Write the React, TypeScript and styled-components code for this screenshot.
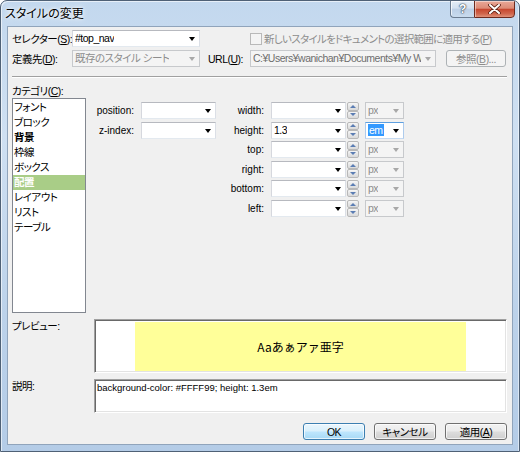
import React from 'react';
import styled, { createGlobalStyle, css } from 'styled-components';

const JP = `"Liberation Sans", "Noto Sans CJK JP", sans-serif`;

const GlobalStyle = createGlobalStyle`
  html, body {
    margin: 0;
    padding: 0;
    background: #ffffff;
  }
  body {
    font-family: ${JP};
    font-size: 10.5px;
    letter-spacing: -0.5px;
    font-feature-settings: "palt";
    color: #000;
  }
  * {
    box-sizing: border-box;
  }
`;

const units = ['width', 'height', 'top', 'right', 'bottom', 'left'];
const categories = ['フォント', 'ブロック', '背景', '枠線', 'ボックス', '配置', 'レイアウト', 'リスト', 'テーブル'];

const App = () => {
  return (
    <>
      <GlobalStyle />
      <Window>
        <TitleBar>
          <Title>スタイルの変更</Title>
          <Caption>
            <HelpButton>?</HelpButton>
            <CloseButton>
              <svg width="13" height="10" viewBox="0 0 13 10">
                <path d="M2 1 L11 9 M11 1 L2 9" stroke="#5a1d10" strokeWidth="3.6" strokeLinecap="round" />
                <path d="M2 1 L11 9 M11 1 L2 9" stroke="#ffffff" strokeWidth="2" strokeLinecap="round" />
              </svg>
            </CloseButton>
          </Caption>
        </TitleBar>

        <Client>
          <FormRow>
            <FieldLabel>
              セレクター(<u>S</u>):
            </FieldLabel>
            <Combo $width={128}>
              <ComboText>#top_nav</ComboText>
              <Arrow />
            </Combo>
            <CheckArea>
              <CheckBox />
              <DisabledText>
                新しいスタイルをドキュメントの選択範囲に適用する(<u>P</u>)
              </DisabledText>
            </CheckArea>
          </FormRow>

          <FormRow $gap>
            <FieldLabel>
              定義先(<u>D</u>):
            </FieldLabel>
            <Combo $width={128} $disabled>
              <ComboText>既存のスタイル シート</ComboText>
              <Arrow $disabled />
            </Combo>
            <UrlLabel>
              URL(<u>U</u>):
            </UrlLabel>
            <Combo $width={186} $disabled>
              <ComboText $dark>C:¥Users¥wanichan¥Documents¥My Web</ComboText>
              <Arrow $disabled />
            </Combo>
            <PushButton $width={60} $disabled $ml={10}>
              参照(<u>B</u>)...
            </PushButton>
          </FormRow>

          <Separator />

          <SectionLabel>
            カテゴリ(<u>C</u>):
          </SectionLabel>

          <Main>
            <ListBox>
              {categories.map((c) => (
                <ListItem key={c} $bold={c === '背景'} $selected={c === '配置'}>
                  {c}
                </ListItem>
              ))}
            </ListBox>

            <Pane>
              <PosGroup>
                <PropRow>
                  <PropLabel $width={40}>position:</PropLabel>
                  <Combo $width={75}>
                    <Arrow />
                  </Combo>
                </PropRow>
                <PropRow>
                  <PropLabel $width={40}>z-index:</PropLabel>
                  <Combo $width={75}>
                    <Arrow />
                  </Combo>
                </PropRow>
              </PosGroup>

              <SizeGroup>
                {units.map((u) => (
                  <PropRow key={u}>
                    <PropLabel $width={43}>{u}:</PropLabel>
                    <Combo $width={75}>
                      {u === 'height' && <ComboText>1.3</ComboText>}
                      <Arrow />
                    </Combo>
                    <Spinner>
                      <SpinHalf>
                        <SpinArrow $up />
                      </SpinHalf>
                      <SpinHalf>
                        <SpinArrow />
                      </SpinHalf>
                    </Spinner>
                    {u === 'height' ? (
                      <Combo $width={39} $focused $ml={6}>
                        <ComboText>
                          <Selected>em</Selected>
                        </ComboText>
                        <Arrow />
                      </Combo>
                    ) : (
                      <Combo $width={39} $disabled $ml={6}>
                        <ComboText>px</ComboText>
                        <Arrow $disabled />
                      </Combo>
                    )}
                  </PropRow>
                ))}
              </SizeGroup>
            </Pane>
          </Main>

          <BoxRow $height={54}>
            <BoxLabel>プレビュー:</BoxLabel>
            <SunkenBox $preview>
              <Swatch>Aaあぁアァ亜字</Swatch>
            </SunkenBox>
          </BoxRow>

          <BoxRow $height={34}>
            <BoxLabel>説明:</BoxLabel>
            <SunkenBox>
              <Description>background-color: #FFFF99; height: 1.3em</Description>
            </SunkenBox>
          </BoxRow>

          <ButtonBar>
            <PushButton $width={62} $default>
              OK
            </PushButton>
            <PushButton $width={62}>キャンセル</PushButton>
            <PushButton $width={62}>
              適用(<u>A</u>)
            </PushButton>
          </ButtonBar>
        </Client>
      </Window>
    </>
  );
};

export default App;

const Window = styled.div`
  width: 520px;
  height: 452px;
  display: flex;
  flex-direction: column;
  border: 1px solid #4f6176;
  border-radius: 7px 7px 0 0;
  background: linear-gradient(180deg, #c3d8ee 0%, #cfe0f2 30%, #bcd2ea 70%, #b4cce7 100%);
  box-shadow: inset 1px 1px 0 rgba(255, 255, 255, 0.6), inset -1px 0 0 rgba(255, 255, 255, 0.5);
  overflow: hidden;
`;

const TitleBar = styled.div`
  height: 25px;
  display: flex;
  align-items: flex-start;
  padding-left: 4px;
`;

const Title = styled.div`
  font-family: "Noto Sans CJK JP", sans-serif;
  font-size: 12px;
  letter-spacing: 0;
  line-height: 24px;
  color: #000;
  text-shadow: 0 0 6px #ffffff, 0 0 3px #ffffff;
`;

const Caption = styled.div`
  margin-left: auto;
  margin-right: 4px;
  display: flex;
  margin-top: -1px;
`;

const HelpButton = styled.div`
  width: 24px;
  height: 18px;
  border: 1px solid #6b7c90;
  border-right: none;
  border-radius: 0 0 0 4px;
  background: linear-gradient(180deg, #e4edf7 0%, #d3e1f0 45%, #bccfe6 50%, #c9dbee 100%);
  box-shadow: inset 1px 1px 0 rgba(255, 255, 255, 0.7);
  display: flex;
  align-items: center;
  justify-content: center;
  font-family: "Liberation Sans", sans-serif;
  font-size: 12px;
  font-weight: bold;
  color: #fff;
  text-shadow: 0 0 1px #3b4a5c, 0 0 1px #3b4a5c, 0 0 2px #3b4a5c;
`;

const CloseButton = styled.div`
  width: 41px;
  height: 18px;
  border: 1px solid #6e2a1e;
  border-radius: 0 0 4px 0;
  background: linear-gradient(180deg, #e9a898 0%, #dd8b76 45%, #c7472f 52%, #d0664d 80%, #e0917a 100%);
  box-shadow: inset 1px 1px 0 rgba(255, 255, 255, 0.45);
  display: flex;
  align-items: center;
  justify-content: center;
`;

const Client = styled.div`
  flex: 1;
  margin: 0 6px 6px 6px;
  border: 1px solid #90a4bb;
  background: #f0f0f0;
  padding: 3px 5px 0 4px;
  display: flex;
  flex-direction: column;
`;

const FormRow = styled.div<{ $gap?: boolean }>`
  display: flex;
  align-items: center;
  height: 17px;
  margin-top: ${({ $gap }) => ($gap ? '3px' : '0')};
`;

const FieldLabel = styled.div`
  width: 60px;
  white-space: nowrap;
`;

const UrlLabel = styled(FieldLabel)`
  width: 42px;
  margin-left: 8px;
`;

const CheckArea = styled.div`
  display: flex;
  align-items: center;
  margin-left: 50px;
`;

const CheckBox = styled.div`
  width: 12px;
  height: 12px;
  border: 1px solid #b9b9b9;
  background: #f4f4f4;
  margin-right: 2px;
`;

const DisabledText = styled.span`
  color: #8d8d8d;
  white-space: nowrap;
  letter-spacing: -0.7px;
`;

const Combo = styled.div<{ $width: number; $disabled?: boolean; $focused?: boolean; $ml?: number }>`
  position: relative;
  width: ${({ $width }) => $width}px;
  height: 17px;
  flex: none;
  margin-left: ${({ $ml }) => $ml ?? 0}px;
  display: flex;
  align-items: center;
  padding: 0 14px 0 2px;
  background: #ffffff;
  border: 1px solid;
  border-color: #b7b9bf #dbdfe6 #e3e9ef #d6d8de;
  overflow: hidden;
  ${({ $disabled }) =>
    $disabled &&
    css`
      background: #f4f4f4;
      border-color: #c7c9cc;
      color: #8d8d8d;
    `}
  ${({ $focused }) =>
    $focused &&
    css`
      border-color: #5d9fe0 #aecbec #c5daf2 #aecbec;
    `}
`;

const ComboText = styled.span<{ $dark?: boolean }>`
  white-space: nowrap;
  overflow: hidden;
  line-height: 15px;
  color: ${({ $dark }) => ($dark ? '#6d6d6d' : 'inherit')};
`;

const Selected = styled.span`
  background: #3399ff;
  color: #ffffff;
  padding: 0 1px;
`;

const Arrow = styled.span<{ $disabled?: boolean }>`
  position: absolute;
  right: 4px;
  top: 6px;
  width: 0;
  height: 0;
  border-left: 3.5px solid transparent;
  border-right: 3.5px solid transparent;
  border-top: 4px solid ${({ $disabled }) => ($disabled ? '#a8a8a8' : '#000000')};
`;

const PushButton = styled.div<{ $width: number; $disabled?: boolean; $default?: boolean; $ml?: number }>`
  width: ${({ $width }) => $width}px;
  height: 17px;
  flex: none;
  margin-left: ${({ $ml }) => $ml ?? 0}px;
  display: flex;
  align-items: center;
  justify-content: center;
  white-space: nowrap;
  border: 1px solid #707070;
  border-radius: 3px;
  background: linear-gradient(180deg, #f2f2f2 0%, #ebebeb 48%, #dddddd 52%, #cfcfcf 100%);
  box-shadow: inset 0 0 0 1px rgba(255, 255, 255, 0.7);
  ${({ $default }) =>
    $default &&
    css`
      border-color: #3c7fb1;
      background: linear-gradient(180deg, #eaf6fd 0%, #d9f0fc 48%, #bee6fd 52%, #a7d9f5 100%);
    `}
  ${({ $disabled }) =>
    $disabled &&
    css`
      border-color: #adb2b5;
      background: #f4f4f4;
      color: #8d8d8d;
      box-shadow: none;
    `}
`;

const Separator = styled.div`
  margin-top: 9px;
  height: 2px;
  border-top: 1px solid #a0a0a0;
  border-bottom: 1px solid #ffffff;
`;

const SectionLabel = styled.div`
  margin-top: 6px;
  height: 14px;
  line-height: 14px;
`;

const Main = styled.div`
  display: flex;
  height: 215px;
`;

const ListBox = styled.div`
  width: 74px;
  background: #ffffff;
  border: 1px solid #828790;
  padding-top: 1px;
`;

const ListItem = styled.div<{ $bold?: boolean; $selected?: boolean }>`
  height: 15px;
  line-height: 15px;
  padding-left: 1px;
  white-space: nowrap;
  font-weight: ${({ $bold, $selected }) => ($bold || $selected ? 'bold' : 'normal')};
  background: ${({ $selected }) => ($selected ? '#a9cd87' : 'transparent')};
  color: ${({ $selected }) => ($selected ? '#ffffff' : '#000000')};
`;

const Pane = styled.div`
  display: flex;
  align-items: flex-start;
  margin-left: 8px;
  padding-top: 4px;
`;

const PosGroup = styled.div`
  display: flex;
  flex-direction: column;
  gap: 2.6px;
`;

const SizeGroup = styled.div`
  display: flex;
  flex-direction: column;
  gap: 2.6px;
  margin-left: 5px;
`;

const PropRow = styled.div`
  display: flex;
  align-items: center;
  height: 17px;
`;

const PropLabel = styled.div<{ $width: number }>`
  width: ${({ $width }) => $width}px;
  margin-right: 7px;
  display: flex;
  justify-content: flex-end;
  white-space: nowrap;
  font-family: "Liberation Sans", sans-serif;
  font-size: 10px;
  letter-spacing: 0;
`;

const Spinner = styled.div`
  width: 12px;
  height: 17px;
  margin-left: 1px;
  display: flex;
  flex-direction: column;
`;

const SpinHalf = styled.div`
  flex: 1;
  border: 1px solid #b8b8b8;
  border-radius: 2px;
  background: linear-gradient(180deg, #f6f6f6 0%, #e6e6e6 50%, #dadada 100%);
  display: flex;
  align-items: center;
  justify-content: center;
`;

const SpinArrow = styled.span<{ $up?: boolean }>`
  width: 0;
  height: 0;
  border-left: 3px solid transparent;
  border-right: 3px solid transparent;
  ${({ $up }) =>
    $up
      ? css`
          border-bottom: 3px solid #5b7db3;
        `
      : css`
          border-top: 3px solid #5b7db3;
        `}
`;

const BoxRow = styled.div<{ $height: number }>`
  display: flex;
  height: ${({ $height }) => $height}px;
  margin-top: 6px;
`;

const BoxLabel = styled.div`
  width: 82px;
  line-height: 12px;
  padding-top: 1px;
`;

const SunkenBox = styled.div<{ $preview?: boolean }>`
  flex: 1;
  background: #ffffff;
  border: 1px solid;
  border-color: #a0a0a0 #ffffff #ffffff #a0a0a0;
  box-shadow: inset 1px 1px 0 #696969, inset -1px -1px 0 #e3e3e3;
  display: flex;
  padding: ${({ $preview }) => ($preview ? '2px 0 1px 0' : '2px 2px')};
  justify-content: ${({ $preview }) => ($preview ? 'center' : 'flex-start')};
`;

const Swatch = styled.div`
  width: 80.5%;
  background: #ffff99;
  display: flex;
  align-items: center;
  justify-content: center;
  font-family: "Noto Sans CJK JP", sans-serif;
  font-feature-settings: normal;
  letter-spacing: 0;
  font-size: 12px;
`;

const Description = styled.div`
  font-family: "Liberation Sans", sans-serif;
  font-size: 9.5px;
  letter-spacing: 0;
  line-height: 11px;
  white-space: nowrap;
`;

const ButtonBar = styled.div`
  display: flex;
  justify-content: flex-end;
  gap: 9px;
  margin-top: 10px;
`;
